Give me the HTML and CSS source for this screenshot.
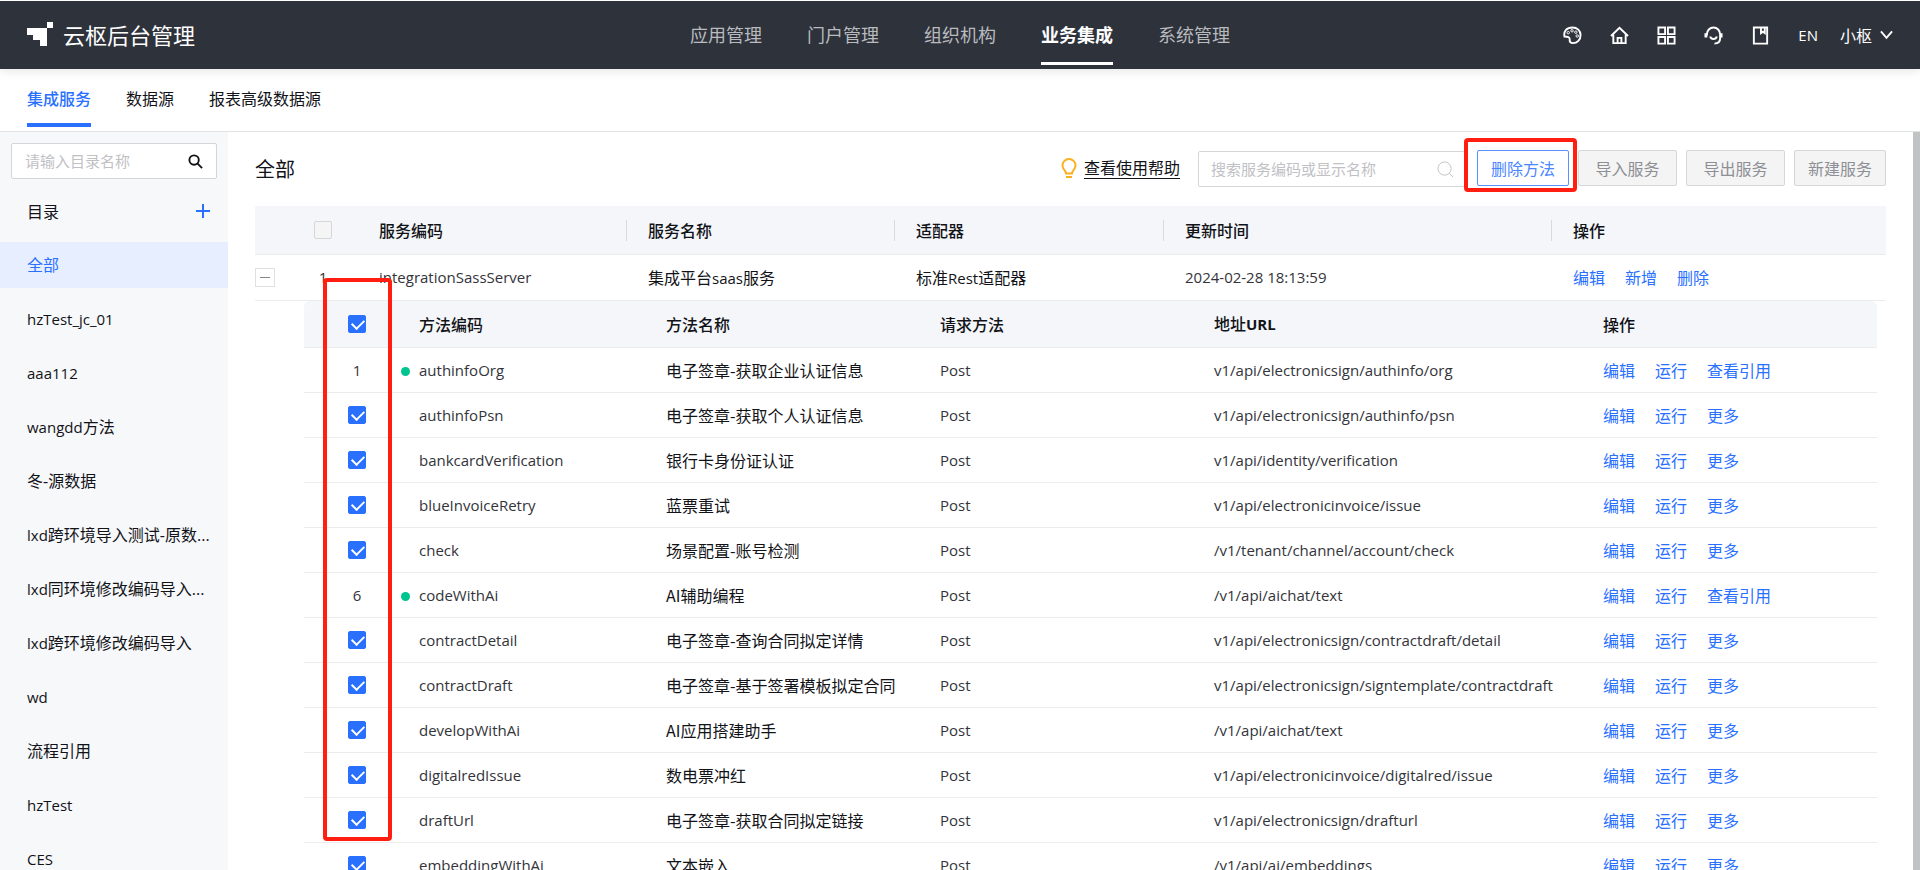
FILE: index.html
```html
<!DOCTYPE html>
<html lang="zh-CN">
<head>
<meta charset="utf-8">
<title>云枢后台管理</title>
<link rel="stylesheet" href="styles.css">
</head>
<body>
<header class="topbar">
  <div class="brand">
    <svg class="logo" viewBox="0 0 26 24" aria-hidden="true"><path d="M20 0h6v6h-6zM0 6h20v18h-7v-6H6v-5H0z"/></svg>
    <span>云枢后台管理</span>
  </div>
  <nav class="mainnav">
    <a href="#">应用管理</a>
    <a href="#">门户管理</a>
    <a href="#">组织机构</a>
    <a href="#" class="active">业务集成</a>
    <a href="#">系统管理</a>
  </nav>
  <div class="tools">
    <button class="tool" aria-label="主题"><svg viewBox="0 0 20 20"><path d="M1.500 11C.5 5.500 4 1.500 10 1.500c5 0 8.500 3.500 8.500 8 0 5-3.500 8.500-8 8.500-2.500 0-3.500-1-3.500-3 .5-3-1.500-4-5.500-4z"/><g class="dots"><circle cx="5.500" cy="7" r="1.300"/><circle cx="9.500" cy="5" r="1.300"/><circle cx="13.500" cy="6.500" r="1.300"/><circle cx="15" cy="10.500" r="1.300"/></g></svg></button>
    <button class="tool" aria-label="首页"><svg viewBox="0 0 20 20"><path d="M1 10.500 10 2l9 8.500M3.500 9v9h13V9M8 18v-5.500h4V18"/></svg></button>
    <button class="tool" aria-label="应用"><svg viewBox="0 0 20 20"><path d="M1.500 1.500h7v7h-7zM11.500 1.500h7v7h-7zM1.500 11.500h7v7h-7zM11.500 11.500h7v7h-7z"/></svg></button>
    <button class="tool" aria-label="客服"><svg viewBox="0 0 20 20"><path d="M3 10V9a7 7.500 0 0 1 14 0v4c0 3.500-2 5.500-6 5.500M6.500 11c1 3.500 6 3.500 7 0"/><path d="M2 7.500v4.500M18 7.500v4.500" stroke-width="3"/></svg></button>
    <button class="tool" aria-label="文档"><svg viewBox="0 0 20 20"><path d="M3 1.500h14v17H3zM10.500 1.500v6l2-1.500 2 1.500v-6"/></svg></button>
    <button class="lang">EN</button>
    <button class="user">小枢 <svg viewBox="0 0 14 10"><path d="m1 1 6 7 6-7"/></svg></button>
  </div>
</header>
<nav class="subnav">
  <a href="#" class="active">集成服务</a>
  <a href="#">数据源</a>
  <a href="#">报表高级数据源</a>
</nav>
<div class="workspace">
  <aside class="sidebar">
    <div class="dirsearch">
      <input type="text" placeholder="请输入目录名称" aria-label="目录名称">
      <button aria-label="搜索"><svg viewBox="0 0 16 16"><circle cx="6.500" cy="6.500" r="5"/><path d="m10 10 5 5"/></svg></button>
    </div>
    <div class="dirhead"><span>目录</span><button aria-label="新增目录"><svg viewBox="0 0 16 16"><path d="M8 1v14M1 8h14"/></svg></button></div>
    <ul class="dirs">
      <li class="active"><a href="#">全部</a></li>
      <li><a href="#" class="latin">hzTest_jc_01</a></li>
      <li><a href="#" class="latin">aaa112</a></li>
      <li><a href="#"><span class="latin">wangdd</span>方法</a></li>
      <li><a href="#">冬-源数据</a></li>
      <li><a href="#"><span class="latin">lxd</span>跨环境导入测试-原数...</a></li>
      <li><a href="#"><span class="latin">lxd</span>同环境修改编码导入...</a></li>
      <li><a href="#"><span class="latin">lxd</span>跨环境修改编码导入</a></li>
      <li><a href="#" class="latin">wd</a></li>
      <li><a href="#">流程引用</a></li>
      <li><a href="#" class="latin">hzTest</a></li>
      <li><a href="#" class="latin">CES</a></li>
    </ul>
  </aside>
  <main class="content">
    <div class="toolbar">
      <h1>全部</h1>
      <a href="#" class="help"><svg viewBox="0 0 16 20"><path d="M5 15.500c0-3-3.500-4-3.500-8a6.500 6.500 0 0 1 13 0c0 4-3.500 5-3.500 8zM5 19h6"/></svg><span>查看使用帮助</span></a>
      <div class="search">
        <input type="text" placeholder="搜索服务编码或显示名称" aria-label="搜索服务">
        <svg viewBox="0 0 18 18"><circle cx="8" cy="8" r="7"/><path d="m13 13 4 4"/></svg>
      </div>
      <div class="actions">
        <span class="marked"><button class="btn primary">删除方法</button></span>
        <button class="btn wide" disabled>导入服务</button>
        <button class="btn wide" disabled>导出服务</button>
        <button class="btn" disabled>新建服务</button>
      </div>
    </div>
    <table class="services">
      <colgroup><col class="c-exp"><col class="c-no"><col class="c-code"><col class="c-name"><col class="c-adapter"><col class="c-time"><col class="c-ops"></colgroup>
      <thead>
        <tr><th></th><th class="num"><input type="checkbox" class="check" disabled aria-label="全选服务"></th><th>服务编码</th><th class="sep">服务名称</th><th class="sep">适配器</th><th class="sep">更新时间</th><th class="sep">操作</th></tr>
      </thead>
      <tbody>
        <tr><td class="exp"><button class="toggle" aria-label="收起"></button></td><td class="latin num">1</td><td class="latin">integrationSassServer</td><td>集成平台<span class="latin">saas</span>服务</td><td>标准<span class="latin">Rest</span>适配器</td><td class="latin">2024-02-28 18:13:59</td><td class="ops"><a href="#">编辑</a><a href="#">新增</a><a href="#">删除</a></td></tr>
      </tbody>
    </table>
    <div class="nested">
      <div class="callout"></div>
      <table class="methods">
        <colgroup><col class="m-check"><col class="m-code"><col class="m-name"><col class="m-req"><col class="m-url"><col class="m-ops"></colgroup>
        <thead>
          <tr><th class="mid"><input type="checkbox" class="check" checked aria-label="全选方法"></th><th>方法编码</th><th>方法名称</th><th>请求方法</th><th>地址<span class="latin strong">URL</span></th><th>操作</th></tr>
        </thead>
        <tbody id="rows"></tbody>
      </table>
    </div>
  </main>
</div>
<script src="app.js"></script>
</body>
</html>
```
FILE: styles.css
```css
* { box-sizing: border-box; }
body {
  margin: 0;
  height: 100vh;
  display: flex;
  flex-direction: column;
  overflow: hidden;
  font: 16px/24px "Noto Sans CJK SC", sans-serif;
  color: #121318;
  background: #fff;
}
a { color: inherit; text-decoration: none; }
button, input { font: inherit; }
button { padding: 0; border: 0; background: none; color: inherit; cursor: pointer; }
svg { display: block; fill: none; stroke: currentColor; }
.latin { font-family: "Open Sans", "Noto Sans CJK SC", sans-serif; font-size: 15px; }
.strong { font-weight: 700; }
td.latin { color: #33343a; }

.topbar {
  position: relative;
  flex: none;
  display: grid;
  grid-template-columns: 1fr auto 1fr;
  align-items: center;
  height: 69px;
  padding: 0 27px;
  border-top: 1px solid #fff;
  background: #2e323b;
  color: #fff;
  box-shadow: 0 2px 10px rgba(0, 0, 0, .1);
}
.brand { display: flex; align-items: center; gap: 10px; padding-bottom: 3px; font-size: 22px; }
.logo { width: 26px; height: 24px; fill: #fff; stroke: none; }
.mainnav { display: flex; gap: 45px; font-size: 18px; color: #b9bbbf; }
.mainnav a { padding: 16px 0; border-bottom: 3px solid transparent; }
.mainnav .active { color: #fff; font-weight: 700; border-color: #fff; }
.tools { display: flex; justify-content: flex-end; align-items: center; gap: 28px; }
.tool svg { width: 19px; height: 19px; stroke-width: 2; }
.tool .dots { stroke-width: 1; }
.lang { font: 15px/24px "Open Sans", sans-serif; }
.user { display: flex; align-items: center; gap: 8px; margin-left: -6px; }
.user svg { width: 13px; height: 10px; stroke-width: 2; }

.subnav {
  flex: none;
  display: flex;
  gap: 35px;
  height: 63px;
  padding: 0 27px;
  border-bottom: 1px solid #e2e3e5;
}
.subnav a { height: 58px; padding-top: 17px; border-bottom: 4px solid transparent; }
.subnav .active { color: #2970ff; font-weight: 500; border-color: #2970ff; }

.workspace { flex: 1; min-height: 0; display: flex; }
.sidebar { flex: none; width: 228px; overflow: hidden; background: #f7f8fa; }
.dirsearch {
  display: flex;
  align-items: center;
  height: 36px;
  margin: 11px 11px 0;
  padding: 0 13px;
  border: 1px solid #d5d6d9;
  border-radius: 2px;
  background: #fff;
}
.dirsearch input { flex: 1; min-width: 0; padding: 0; border: 0; outline: 0; background: none; font-size: 15px; }
input::placeholder { color: #bfc1c5; }
.dirsearch svg { width: 15px; height: 15px; stroke-width: 2; }
.dirhead { display: flex; justify-content: space-between; align-items: center; height: 63px; padding: 0 17px 0 27px; }
.dirhead button { color: #2970ff; }
.dirhead svg { width: 16px; height: 16px; stroke-width: 2; }
.dirs { margin: 0; padding: 0; list-style: none; }
.dirs li { height: 46px; margin-bottom: 8px; padding: 11px 8px 11px 27px; }
.dirs a { display: block; white-space: nowrap; font-family: "Open Sans", "Noto Sans CJK SC", sans-serif; }
.dirs .active { background: #e6eeff; color: #2970ff; }

.content {
  flex: 1;
  min-width: 0;
  overflow: hidden;
  padding: 0 27px;
  border-right: 7px solid #c1c2c4;
}
.toolbar { display: flex; align-items: center; height: 74px; }
h1 { flex: 1; margin: 0; font-size: 20px; font-weight: 400; }
.help { display: flex; align-items: center; gap: 7px; margin-right: 18px; padding-bottom: 3px; }
.help svg { width: 16px; height: 20px; color: #fbb021; stroke-width: 2; }
.help span { line-height: 22px; border-bottom: 1px solid #121318; }
.search { display: flex; align-items: center; width: 270px; height: 36px; padding: 0 13px 0 12px; border: 1px solid #d5d6d9; border-radius: 2px; }
.search input { flex: 1; min-width: 0; padding: 0; border: 0; outline: 0; font-size: 15px; }
.search svg { width: 17px; height: 17px; color: #bfc1c5; stroke-width: 1; }
.actions { display: flex; align-items: center; gap: 9px; padding: 0 0 3px 9px; }
.marked { position: relative; }
.marked::after {
  content: "";
  position: absolute;
  inset: -12px -8px -6px -13px;
  border: 4px solid #ff1e10;
  border-radius: 4px;
  pointer-events: none;
}
.btn { display: block; width: 92px; height: 36px; border: 1px solid #d5d6d9; border-radius: 2px; background: #f4f4f4; color: #8d8f94; cursor: default; }
.btn.wide { width: 99px; }
.btn.primary { border-color: #5990ff; background: #fff; color: #4a86ff; }

table { width: 100%; table-layout: fixed; border-collapse: separate; border-spacing: 0; }
th, td { padding: 0 0 1px; text-align: left; border-bottom: 1px solid #ebecee; white-space: nowrap; }
th { font-weight: 500; background: #f4f6fa; }
.services th { height: 49px; }
.services td { height: 46px; }
.c-exp { width: 58px; }
.c-no { width: 66px; }
.c-code { width: 269px; }
.c-name { width: 268px; }
.c-adapter { width: 269px; }
.c-time { width: 388px; }
.sep { position: relative; }
.sep::before { content: ""; position: absolute; left: -22px; top: 14px; width: 1px; height: 21px; background: #d9dadd; }
.toggle { display: grid; place-items: center; width: 20px; height: 19px; border: 1px solid #dfe0e2; }
.toggle::before { content: ""; width: 10px; height: 1px; background: #85878c; }
.ops a { margin-right: 20px; color: #2970ff; }
.num { padding-right: 46px; text-align: center; }
.mid { padding-right: 9px; text-align: center; }
.check {
  display: block;
  appearance: none;
  width: 18px;
  height: 18px;
  margin: 0 auto;
  border: 1px solid #d5d6d9;
  border-radius: 2px;
  background: #f5f5f5;
}
.check:checked {
  position: relative;
  border-color: #2970ff;
  background: #2970ff;
}
.check:checked::after {
  content: "";
  position: absolute;
  left: 5px;
  top: 1px;
  width: 6px;
  height: 10px;
  border: solid #fff;
  border-width: 0 2px 2px 0;
  transform: rotate(45deg);
}

.nested { position: relative; padding: 0 9px 0 49px; }
.callout { position: absolute; z-index: 1; left: 68px; top: -23px; width: 69px; height: 563px; border: 4px solid #ff1e10; border-radius: 4px; pointer-events: none; }
.methods th { height: 47px; }
.methods th:first-child { border-top-left-radius: 6px; }
.methods th:last-child { border-top-right-radius: 6px; }
.methods td { height: 45px; }
.m-check { width: 115px; }
.m-code { width: 247px; }
.m-name { width: 274px; }
.m-req { width: 274px; }
.m-url { width: 389px; }
.live { position: relative; }
.live::before { content: ""; position: absolute; left: -18px; top: 19px; width: 9px; height: 9px; border-radius: 50%; background: #00c48f; }
```
FILE: app.js
```js
const methods = [
  ["authinfoOrg", "电子签章-获取企业认证信息", "v1/api/electronicsign/authinfo/org", 1],
  ["authinfoPsn", "电子签章-获取个人认证信息", "v1/api/electronicsign/authinfo/psn"],
  ["bankcardVerification", "银行卡身份证认证", "v1/api/identity/verification"],
  ["blueInvoiceRetry", "蓝票重试", "v1/api/electronicinvoice/issue"],
  ["check", "场景配置-账号检测", "/v1/tenant/channel/account/check"],
  ["codeWithAi", "AI辅助编程", "/v1/api/aichat/text", 6],
  ["contractDetail", "电子签章-查询合同拟定详情", "v1/api/electronicsign/contractdraft/detail"],
  ["contractDraft", "电子签章-基于签署模板拟定合同", "v1/api/electronicsign/signtemplate/contractdraft"],
  ["developWithAi", "AI应用搭建助手", "/v1/api/aichat/text"],
  ["digitalredIssue", "数电票冲红", "v1/api/electronicinvoice/digitalred/issue"],
  ["draftUrl", "电子签章-获取合同拟定链接", "v1/api/electronicsign/drafturl"],
  ["embeddingWithAi", "文本嵌入", "/v1/api/ai/embeddings"]
];
document.getElementById("rows").innerHTML = methods.map(([code, name, url, no]) => `
  <tr>
    <td class="mid latin">${no || `<input type="checkbox" class="check" checked aria-label="${code}">`}</td>
    <td class="latin${no ? " live" : ""}">${code}</td>
    <td>${name}</td>
    <td class="latin">Post</td>
    <td class="latin">${url}</td>
    <td class="ops"><a href="#">编辑</a><a href="#">运行</a><a href="#">${no ? "查看引用" : "更多"}</a></td>
  </tr>`).join("");
```
